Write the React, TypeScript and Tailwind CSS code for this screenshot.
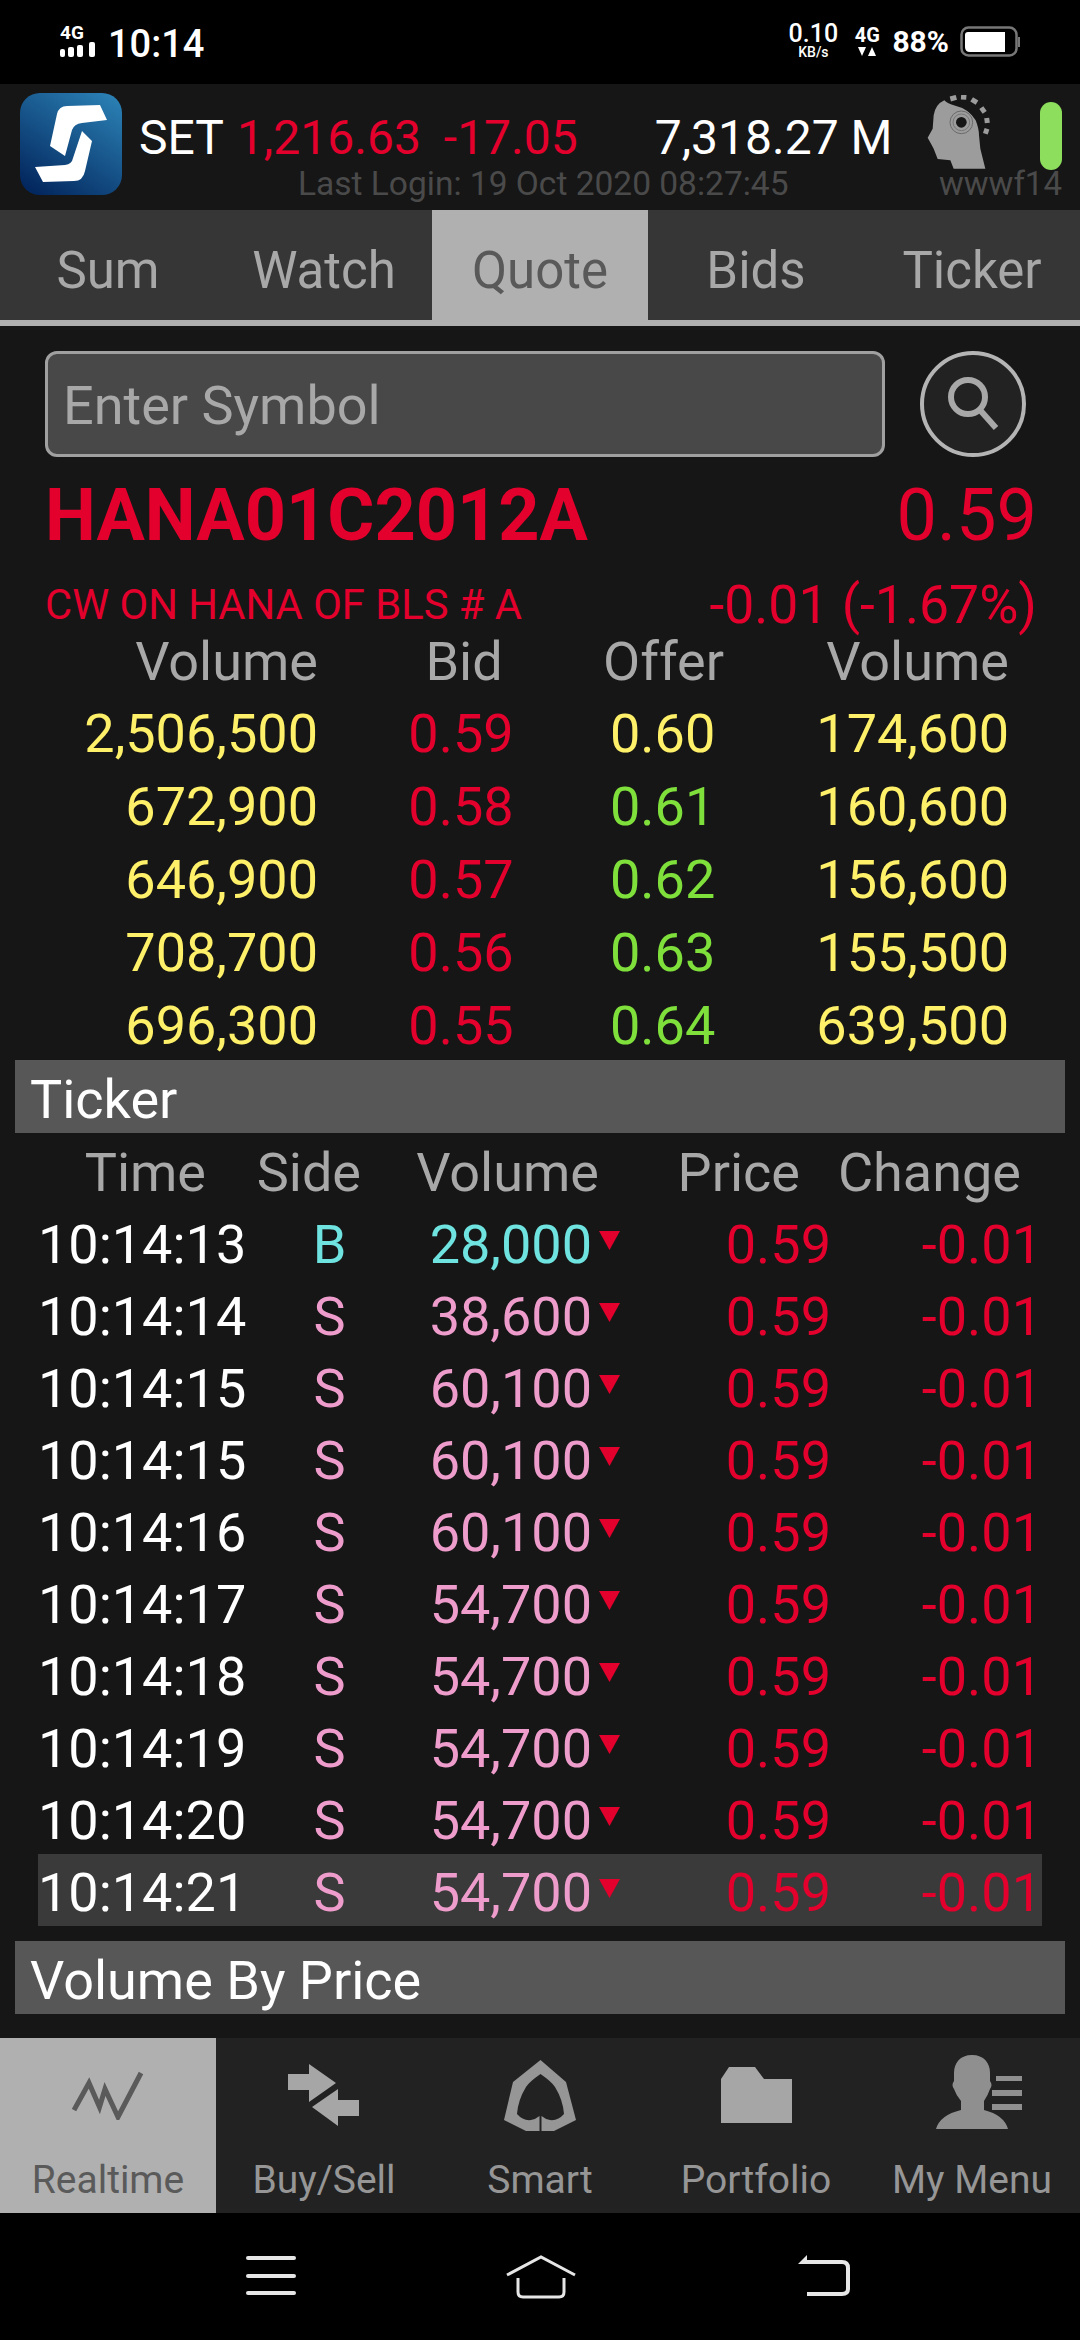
import React from "react";

const bids = [
  ["2,506,500", "0.59", "0.60", "174,600", false],
  ["672,900", "0.58", "0.61", "160,600", true],
  ["646,900", "0.57", "0.62", "156,600", true],
  ["708,700", "0.56", "0.63", "155,500", true],
  ["696,300", "0.55", "0.64", "639,500", true],
] as const;

const ticks = [
  ["10:14:13", "B", "28,000"],
  ["10:14:14", "S", "38,600"],
  ["10:14:15", "S", "60,100"],
  ["10:14:15", "S", "60,100"],
  ["10:14:16", "S", "60,100"],
  ["10:14:17", "S", "54,700"],
  ["10:14:18", "S", "54,700"],
  ["10:14:19", "S", "54,700"],
  ["10:14:20", "S", "54,700"],
  ["10:14:21", "S", "54,700"],
];

function StatusBar() {
  return (
    <div className="flex h-[84px] items-start justify-between bg-black pl-[60px] pr-[60px] text-white">
      <div className="flex items-start pt-[23px]">
        <div className="flex w-[48px] flex-col">
          <span className="h-[19px] text-[19px] font-bold leading-[19px]">4G</span>
          <svg width="36" height="15" viewBox="0 0 36 15" fill="#fff">
            <rect x="0" y="7" width="5" height="8" rx="2" />
            <rect x="8" y="5" width="6" height="10" rx="2" />
            <rect x="17" y="3" width="6" height="12" rx="2" />
            <rect x="29" y="0" width="6" height="15" rx="2" />
          </svg>
        </div>
        <span className="mt-[-2px] text-[38px] font-medium leading-[46px]">10:14</span>
      </div>
      <div className="flex items-start pt-[22px]">
        <div className="flex w-[50px] flex-col items-center">
          <span className="h-[23px] text-[25px] font-medium leading-[23px]">0.10</span>
          <span className="h-[14px] text-[14px] font-medium leading-[14px]">KB/s</span>
        </div>
        <div className="ml-[16px] mt-[4px] flex w-[26px] flex-col items-center">
          <span className="h-[18px] text-[20px] font-bold leading-[18px]">4G</span>
          <svg width="18" height="9" viewBox="0 0 18 9" className="mt-[3px]" fill="#fff">
            <polygon points="0,0 8,0 4,9" />
            <polygon points="10,9 18,9 14,0" />
          </svg>
        </div>
        <span className="ml-[12px] mt-[4px] text-[30px] font-bold leading-[32px]">88%</span>
        <svg width="60" height="32" viewBox="0 0 60 32" className="ml-[11px] mt-[4px]">
          <rect x="1.5" y="1.5" width="55" height="28" rx="7" fill="none" stroke="#777" strokeWidth="2.5" />
          <path d="M8 6 H45 V26 H10 Q5 26 5 21 V9 Q5 6 8 6 Z" fill="#fff" />
          <rect x="58" y="11" width="2" height="10" fill="#777" />
        </svg>
      </div>
    </div>
  );
}

function Logo() {
  return (
    <svg width="102" height="102" viewBox="0 0 102 102" className="shrink-0">
      <defs>
        <linearGradient id="lg" x1="0.85" y1="0" x2="0.2" y2="1">
          <stop offset="0" stopColor="#2a7fb3" />
          <stop offset="1" stopColor="#03285f" />
        </linearGradient>
      </defs>
      <rect width="102" height="102" rx="20" fill="url(#lg)" />
      <path d="M80 12 L87 27 L62 30 Q54 31 52 37 L45 63 L30 53 L37 21 Q39 13 47 13 Z" fill="#fff" />
      <path d="M62 38 L72 48 L65 78 Q63 88 54 88 L23 89 L15 74 L45 72 Q52 71 53 65 Z" fill="#fff" />
    </svg>
  );
}

function Head() {
  return (
    <svg width="65" height="74" viewBox="80 44 195 222" className="shrink-0">
      <path d="M255 265 L160 265 L150 240 L112 236 L100 205 L92 190 L82 172 L97 145 L100 105 Q105 72 132 60 Q140 70 165 76 Q205 85 226 120 Q236 145 236 165 L240 205 Z" fill="#9c9c9c" />
      <g fill="none" stroke="#9c9c9c" strokeWidth="15">
        <path d="M150 56 L168 51" />
        <path d="M182 50 L198 51" />
        <path d="M214 57 L230 67" />
        <path d="M243 82 L253 96" />
        <path d="M259 113 L261 128" />
        <path d="M260 145 L255 160" />
      </g>
      <circle cx="183" cy="126" r="36" fill="#9c9c9c" />
      <circle cx="183" cy="126" r="34" fill="none" stroke="#6a6a6a" strokeWidth="3" />
      <circle cx="183" cy="126" r="25" fill="none" stroke="#777" strokeWidth="3" />
      <circle cx="183" cy="126" r="16" fill="#161616" />
    </svg>
  );
}

function Header() {
  return (
    <div className="flex h-[126px] bg-[#161616] pl-[20px] pt-[9px]">
      <Logo />
      <div className="w-[805px] pl-[17px] pt-[18px]">
        <div className="flex text-[48px] leading-[54px]">
          <span className="text-white">SET</span>
          <span className="ml-[13px] text-[#e4002c]">1,216.63</span>
          <span className="ml-[23px] text-[#e4002c]">-17.05</span>
          <span className="ml-[77px] text-white">7,318.27 M</span>
        </div>
        <div className="whitespace-nowrap pl-[159px] text-[33.5px] leading-[38px] text-[#4a4a4a]">Last Login: 19 Oct 2020 08:27:45</div>
      </div>
      <div className="flex w-[135px] shrink-0 flex-col">
        <div className="flex h-[72px] items-start pt-[2px]">
          <Head />
          <div className="ml-[48px] mt-[7px] h-[68px] w-[24px] rounded-[12px] bg-[#8cde5c]" />
        </div>
        <div className="pl-[12px] text-[33px] leading-[38px] text-[#4a4a4a]">wwwf14</div>
      </div>
    </div>
  );
}

function Tabs() {
  return (
    <div className="flex h-[116px] border-b-[6px] border-[#b0b0b0] bg-[#363636]">
      {["Sum", "Watch", "Quote", "Bids", "Ticker"].map((t) => (
        <div
          key={t}
          className={
            t === "Quote"
              ? "flex h-[110px] w-[216px] items-center justify-center bg-[#b0b0b0] pt-[12px] text-[51px] text-[#595959]"
              : "flex h-[110px] w-[216px] items-center justify-center pt-[12px] text-[51px] text-[#a8a8a8]"
          }
        >
          {t}
        </div>
      ))}
    </div>
  );
}

function SearchRow() {
  return (
    <div className="flex pl-[45px] pt-[25px]">
      <div className="flex h-[106px] w-[840px] items-center rounded-[12px] border-[3px] border-[#a0a0a0] bg-[#484848] pl-[15px] pt-[3px] text-[54px] text-[#a8a8a8]">
        Enter Symbol
      </div>
      <svg width="106" height="106" viewBox="0 0 106 106" className="ml-[35px]">
        <circle cx="53" cy="53" r="51" fill="#222" stroke="#b4b4b4" strokeWidth="4" />
        <circle cx="48" cy="46" r="17" fill="none" stroke="#a8a8a8" strokeWidth="6" />
        <path d="M60 59 L76 77" fill="none" stroke="#a8a8a8" strokeWidth="6" />
      </svg>
    </div>
  );
}

function Quote() {
  return (
    <div className="pl-[45px] pr-[43px] text-[#e4002c]">
      <div className="mt-[17px] flex h-[84px] items-center justify-between">
        <span className="text-[72px] font-bold leading-[84px]">HANA01C2012A</span>
        <span className="text-[72px] leading-[84px]">0.59</span>
      </div>
      <div className="flex h-[64px] items-start justify-between pt-[30px] leading-[34px]">
        <span className="text-[41.7px]">CW ON HANA OF BLS # A</span>
        <span className="text-[53.5px]">-0.01 (-1.67%)</span>
      </div>
    </div>
  );
}

function BidTable() {
  return (
    <div className="text-[54px] leading-[60px]">
      <div className="grid h-[73px] grid-cols-[318px_292px_106px_293px] items-center pt-[6px] text-[#a8a8a8]">
        <span className="text-right">Volume</span>
        <span className="text-center">Bid</span>
        <span className="ml-[-7px] whitespace-nowrap text-center">Offer</span>
        <span className="text-right">Volume</span>
      </div>
      {bids.map((b) => (
        <div key={b[0]} className="grid h-[73px] grid-cols-[318px_292px_106px_293px] items-center pt-[4px]">
          <span className="text-right text-[#fff06a]">{b[0]}</span>
          <span className="pr-[6px] text-center text-[#e4002c]">{b[1]}</span>
          <span className={b[4] ? "pr-[2px] text-center text-[#7fe03c]" : "pr-[2px] text-center text-[#fff06a]"}>{b[2]}</span>
          <span className="text-right text-[#fff06a]">{b[3]}</span>
        </div>
      ))}
    </div>
  );
}

function SectionBar({ children }: { children: React.ReactNode }) {
  return (
    <div className="mx-[15px] flex h-[73px] items-center bg-[#575757] pl-[15px] pt-[6px] text-[54px] text-white">{children}</div>
  );
}

function TickerTable() {
  return (
    <div className="text-[54px]">
      <div className="flex h-[73px] items-center pt-[6px] text-[#a8a8a8]">
        <span className="w-[206px] text-right">Time</span>
        <span className="w-[155px] text-right">Side</span>
        <span className="w-[238px] text-right">Volume</span>
        <span className="w-[201px] text-right">Price</span>
        <span className="w-[221px] text-right">Change</span>
      </div>
      <div className="px-[38px]">
        {ticks.map((t, i) => (
          <div key={i} className={i === 9 ? "flex h-[72px] items-center bg-[#3a3a3a] pt-[5px]" : "flex h-[72px] items-center pt-[5px]"}>
            <span className="w-[208px] text-right text-white">{t[0]}</span>
            <span className={t[1] === "B" ? "w-[167px] text-center text-[#6fe3e0]" : "w-[167px] text-center text-[#ee9ccb]"}>{t[1]}</span>
            <span className={t[1] === "B" ? "w-[179px] text-right text-[#6fe3e0]" : "w-[179px] text-right text-[#ee9ccb]"}>{t[2]}</span>
            <span className="w-[28px] pl-[7px]">
              <svg width="21" height="19" viewBox="0 0 21 19" className="mb-[8px]">
                <polygon points="0,0 21,0 10.5,19" fill="#e4002c" />
              </svg>
            </span>
            <span className="w-[211px] text-right text-[#e4002c]">0.59</span>
            <span className="w-[211px] text-right text-[#e4002c]">-0.01</span>
          </div>
        ))}
      </div>
    </div>
  );
}

function BottomNav() {
  const grey = "#a6a6a6";
  const items = [
    {
      label: "Realtime",
      icon: (
        <svg width="72" height="50" viewBox="0 0 72 50" className="mt-[32px]">
          <polyline points="2,40 17,13 27.5,37 33,19 46,47 69,3" fill="none" stroke="#5a5a5a" strokeWidth="5" />
        </svg>
      ),
    },
    {
      label: "Buy/Sell",
      icon: (
        <svg width="72" height="62" viewBox="0 0 72 62" className="mt-[26px]" fill={grey}>
          <polygon points="0,10 21,10 21,0 48,19 21,38 21,26 0,26" />
          <polygon points="71,36 50,36 50,25 24,43 50,62 50,52 71,52" />
        </svg>
      ),
    },
    {
      label: "Smart",
      icon: (
        <svg width="72" height="71" viewBox="0 0 72 71" className="mt-[22px]">
          <path
            fillRule="evenodd"
            d="M36.5 0 L62 22 L72 60 L50 71 L22 71 L0 60 L9 22 Z M36.5 14 Q48 22 51 27 Q59 40 60 54 Q54 61 46 60 Q41 59 37.5 56 L37.5 71 L35.5 71 L35.5 56 Q32 59 27 60 Q19 61 13 54 Q14 40 22 27 Q25 22 36.5 14 Z"
            fill="#969696"
          />
        </svg>
      ),
    },
    {
      label: "Portfolio",
      icon: (
        <svg width="71" height="56" viewBox="0 0 71 56" className="mt-[29px]">
          <path d="M0 12 L8 0 H34 L43 12 H71 V56 H0 Z" fill={grey} />
        </svg>
      ),
    },
    {
      label: "My Menu",
      icon: (
        <svg width="86" height="74" viewBox="0 0 86 74" className="ml-[14px] mt-[17px]" fill="#8f8f8f">
          <path d="M36 0 C24 0 18 8 18 18 L18 26 Q15 30 18 34 Q20 40 25 46 L25 55 Q4 60 0 74 H72 Q68 60 48 55 L48 46 Q52 40 54 34 Q57 30 54 26 L54 18 C54 8 48 0 36 0 Z" />
          <rect x="60" y="21" width="26" height="5" />
          <rect x="56" y="35" width="30" height="6" />
          <rect x="56" y="49" width="30" height="6" />
        </svg>
      ),
    },
  ];
  return (
    <div className="flex h-[175px] bg-[#222222]">
      {items.map((it, i) => (
        <div
          key={it.label}
          className={
            i === 0
              ? "flex w-[216px] flex-col items-center bg-[#b0b0b0] text-[#5a5a5a]"
              : "flex w-[216px] flex-col items-center text-[#969696]"
          }
        >
          <div className="h-[105px]">{it.icon}</div>
          <span className="pt-[5px] text-[39px] leading-[65px]">{it.label}</span>
        </div>
      ))}
    </div>
  );
}

function SystemNav() {
  return (
    <div className="flex h-[127px] items-start bg-black pl-[246px] pt-[42px]">
      <svg width="50" height="42" viewBox="0 0 50 42" className="mt-[1px]" fill="#e6e6e6">
        <rect y="0" width="50" height="4" rx="2" />
        <rect y="18" width="50" height="4" rx="2" />
        <rect y="35" width="50" height="4" rx="2" />
      </svg>
      <svg width="70" height="44" viewBox="0 0 70 44" className="ml-[210px]" fill="none" stroke="#e6e6e6" strokeWidth="3">
        <path d="M1 20 L35 2 L69 20" />
        <path d="M12 23 V37 Q12 42 17 42 H53 Q58 42 58 37 V23" />
      </svg>
      <svg width="52" height="42" viewBox="0 0 52 42" className="ml-[222px]" fill="none" stroke="#e6e6e6" strokeWidth="4">
        <path d="M9 7 H44 Q50 7 50 13 V34 Q50 39 44 39 H9" />
        <polygon points="0,9 9,0 9,9" fill="#e6e6e6" stroke="none" />
      </svg>
    </div>
  );
}

export default function App() {
  return (
    <div className="h-[2340px] w-[1080px] overflow-hidden bg-[#161616] font-['Roboto',sans-serif]">
      <StatusBar />
      <Header />
      <Tabs />
      <div className="h-[1712px]">
        <SearchRow />
        <Quote />
        <BidTable />
        <SectionBar>Ticker</SectionBar>
        <TickerTable />
        <div className="mt-[15px]">
          <SectionBar>Volume By Price</SectionBar>
        </div>
      </div>
      <BottomNav />
      <SystemNav />
    </div>
  );
}
